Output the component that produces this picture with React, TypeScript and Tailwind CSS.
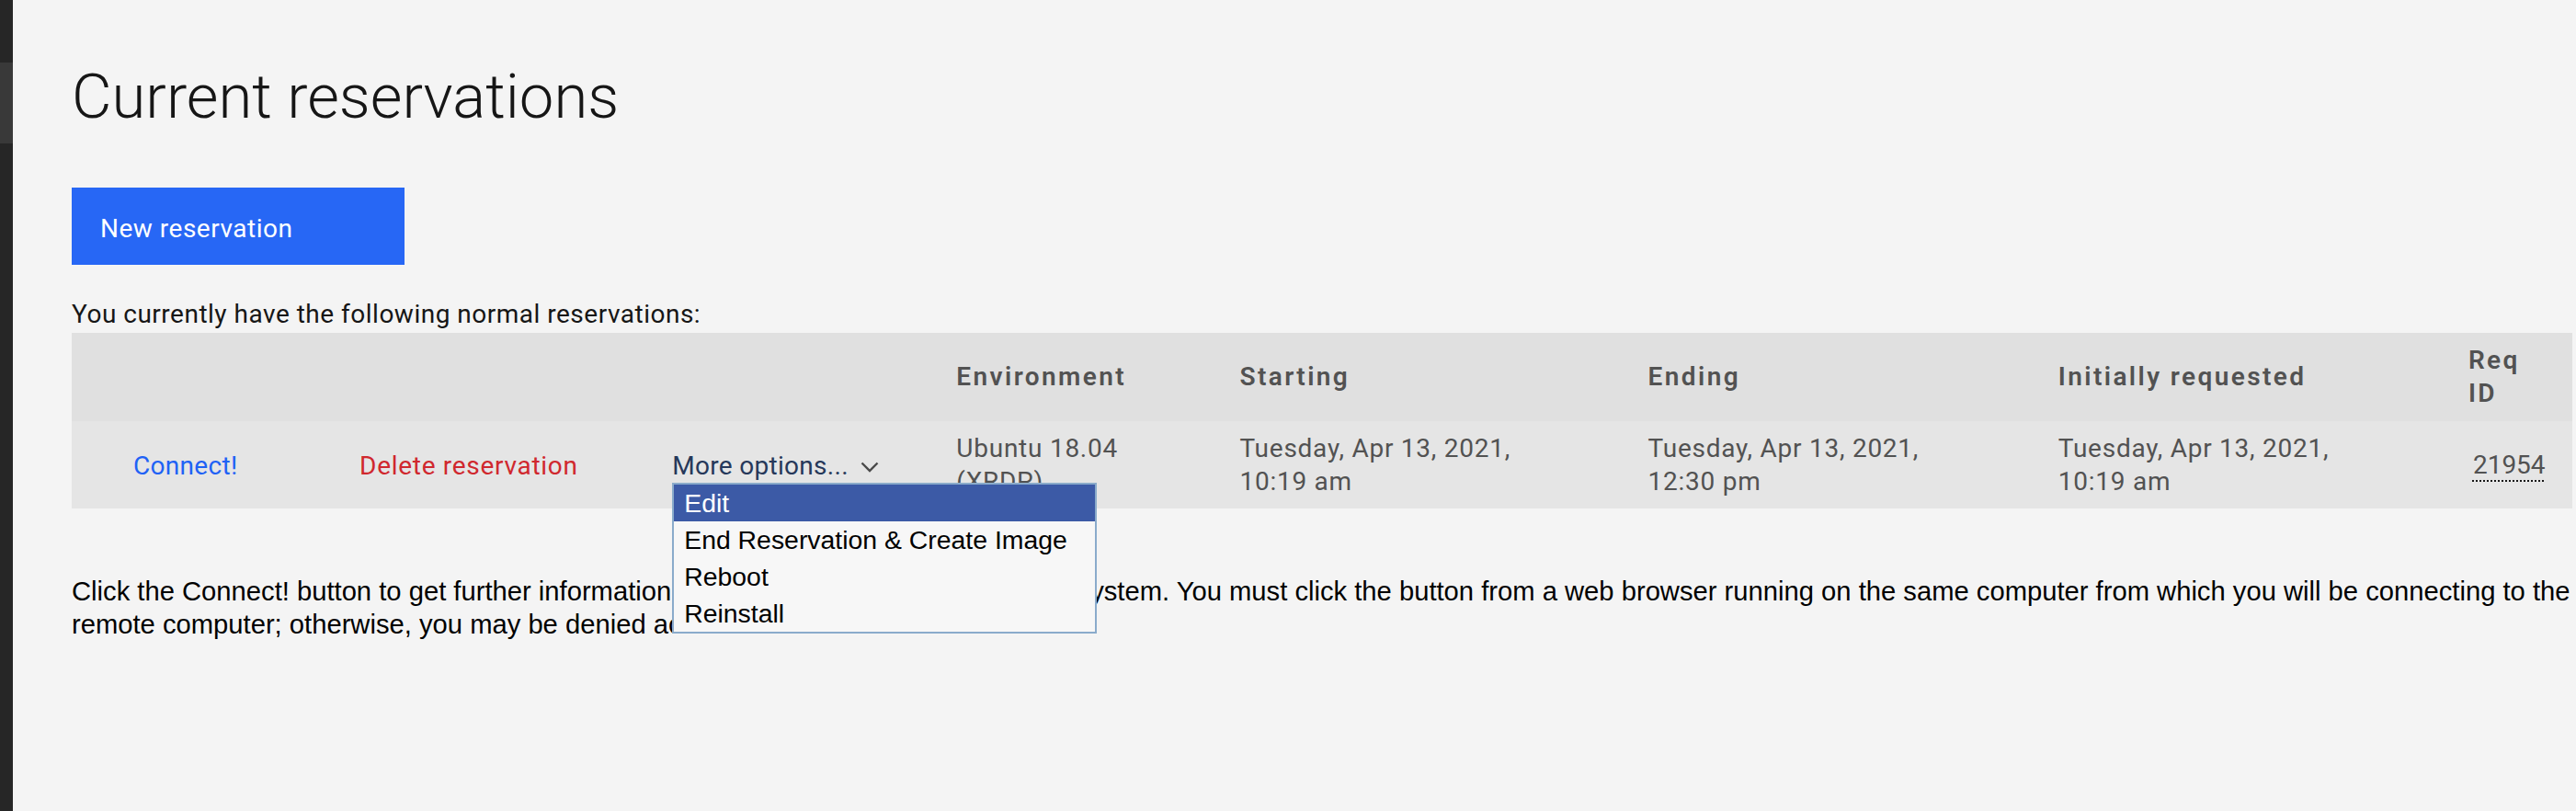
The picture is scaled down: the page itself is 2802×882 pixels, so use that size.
import React from "react";

const plex = "font-['Roboto','Noto_Sans',sans-serif]";
const helv = "font-['Liberation_Sans',Arial,sans-serif]";

const headers = ["", "", "", "Environment", "Starting", "Ending", "Initially requested", "Req ID"];
const widths = [281, 340, 309, 308, 444, 446, 446, 145];

function Chevron() {
    return (
        <svg width="20" height="12" viewBox="0 0 20 12" className="ml-[13px] mt-[2px]" fill="none">
            <path d="M1.5 1.5 L10 10 L18.5 1.5" stroke="#4a4a4a" strokeWidth="2.4" />
        </svg>
    );
}

function DateCell({ date, time }: { date: string; time: string }) {
    return (
        <td className="pl-[32px] pr-[16px] align-middle leading-[36px] tracking-[0.75px] text-[#525252]">
            <span className="block">{date}</span>
            <span className="block">{time}</span>
        </td>
    );
}

export default function App() {
    const menu = ["Edit", "End Reservation & Create Image", "Reboot", "Reinstall"];

    return (
        <div className="flex w-full h-[882px] overflow-hidden bg-[#f4f4f4]">
            {/* left nav strip */}
            <div className="w-[14px] shrink-0 bg-[#262626]">
                <div className="mt-[68px] h-[88px] bg-[#393939]" />
            </div>

            <main className="pl-[64px] flex flex-col">
                <h1 className={`${plex} font-light text-[67px] leading-[80px] pt-[65px] text-[#161616]`}>
                    Current reservations
                </h1>

                <button className={`${plex} mt-[59px] w-[362px] h-[84px] bg-[#2767f5] text-white text-[28px] tracking-[0.5px] text-left pl-[31px] pt-[5px] flex items-center`}>
                    New reservation
                </button>

                <p className={`${plex} mt-[36px] text-[28px] leading-[36px] tracking-[0.5px] text-[#161616]`}>
                    You currently have the following normal reservations:
                </p>

                <table className={`${plex} mt-[2px] table-fixed border-collapse w-[2720px] text-[28px]`}>
                    <colgroup>
                        {widths.map((w, i) => (
                            <col key={i} style={{ width: w }} />
                        ))}
                    </colgroup>
                    <thead>
                        <tr className="bg-[#e0e0e0] h-[96px]">
                            {headers.map((h, i) => (
                                <th key={i} className="pl-[32px] pr-[16px] text-left align-middle font-semibold tracking-[2.4px] leading-[36px] text-[#525252]">
                                    {h === "Req ID" ? (
                                        <>
                                            <span className="block">Req</span>
                                            <span className="block">ID</span>
                                        </>
                                    ) : (
                                        h
                                    )}
                                </th>
                            ))}
                        </tr>
                    </thead>
                    <tbody>
                        <tr className="bg-[#e5e5e5] h-[95px]">
                            <td className="pl-[67px] align-middle leading-[36px] pt-[3px] tracking-[0.3px] text-[#1f62f5]">Connect!</td>
                            <td className="pl-[32px] align-middle leading-[36px] pt-[3px] tracking-[0.7px] text-[#d0282e]">Delete reservation</td>
                            <td className="pl-[32px] align-middle pt-[3px]">
                                <div className="relative inline-flex items-center leading-[36px] tracking-[0.3px] text-[#26385a]">
                                    More options...
                                    <Chevron />
                                    {/* open select list */}
                                    <ul className={`${helv} absolute left-0 top-full w-[462px] border-2 border-[#8aabcb] bg-[#f7f7f7] text-[28.4px] tracking-normal text-black z-10`}>
                                        {menu.map((m, i) => (
                                            <li key={m} className={`h-[40px] leading-[40px] pl-[11px] whitespace-nowrap ${i === 0 ? "bg-[#3c5aa6] text-white" : ""}`}>
                                                {m}
                                            </li>
                                        ))}
                                    </ul>
                                </div>
                            </td>
                            <td className="pl-[32px] pr-[16px] align-middle leading-[36px] tracking-[0.75px] text-[#525252]">Ubuntu 18.04 (XRDP)</td>
                            <DateCell date="Tuesday, Apr 13, 2021," time="10:19 am" />
                            <DateCell date="Tuesday, Apr 13, 2021," time="12:30 pm" />
                            <DateCell date="Tuesday, Apr 13, 2021," time="10:19 am" />
                            <td className="pl-[37px] align-middle leading-[36px] text-[#525252]">
                                <span className="underline decoration-dotted decoration-[#161616] decoration-2 underline-offset-[8px]">21954</span>
                            </td>
                        </tr>
                    </tbody>
                </table>

                <p className={`${helv} mt-[72px] text-[29.2px] leading-[36px] text-black whitespace-nowrap`}>
                    Click the Connect! button to get further information about connecting to the reserved system. You must click the button from a web browser running on the same computer from which you will be connecting to the
                    <br />
                    remote computer; otherwise, you may be denied access to the machine.
                </p>
            </main>
        </div>
    );
}
